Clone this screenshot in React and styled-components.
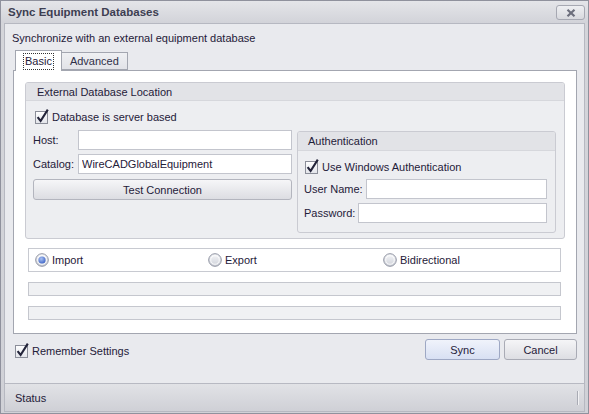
import styled, { createGlobalStyle } from "styled-components";

const Global = createGlobalStyle`
  html, body {
    margin: 0;
    padding: 0;
    background: #e9eaee;
  }
  * {
    box-sizing: border-box;
  }
  body {
    font-family: "Liberation Sans", Arial, sans-serif;
    font-size: 11px;
    color: #1f2039;
  }
`;

const CheckBox = ({ label }) => (
  <CheckRow>
    <svg width="15" height="16" viewBox="0 0 15 16">
      <defs>
        <linearGradient id="cbg" x1="0" y1="0" x2="0" y2="1">
          <stop offset="0" stopColor="#ffffff" />
          <stop offset="1" stopColor="#e2e4ea" />
        </linearGradient>
      </defs>
      <rect x="0.5" y="3.5" width="12" height="12" fill="url(#cbg)" stroke="#8b8e99" />
      <path d="M2.6 9.2 L5.6 13 L12.8 1.6" fill="none" stroke="#23243a" strokeWidth="2.1" strokeLinejoin="miter" />
    </svg>
    <span>{label}</span>
  </CheckRow>
);

const Radio = ({ label, checked }) => (
  <RadioItem>
    <svg width="14" height="14" viewBox="0 0 14 14">
      <defs>
        <linearGradient id="rbg" x1="0" y1="0" x2="0" y2="1">
          <stop offset="0" stopColor="#f6f7f9" />
          <stop offset="1" stopColor="#cdd0d8" />
        </linearGradient>
        <radialGradient id="rdot" cx="0.4" cy="0.35" r="0.7">
          <stop offset="0" stopColor="#a9c1f2" />
          <stop offset="1" stopColor="#3c63c6" />
        </radialGradient>
      </defs>
      <circle cx="7" cy="7" r="6.3" fill="url(#rbg)" stroke="#8f93a1" />
      <circle cx="7" cy="7" r="4.3" fill="none" stroke="#ffffff" strokeOpacity="0.8" />
      {checked && <circle cx="7" cy="7" r="3.6" fill="url(#rdot)" />}
    </svg>
    <span>{label}</span>
  </RadioItem>
);

const Field = ({ label, value, labelWidth }) => (
  <FieldRow>
    <Label width={labelWidth}>{label}</Label>
    <Input defaultValue={value} />
  </FieldRow>
);

export default function App() {
  return (
    <>
      <Global />
      <Window>
        <TitleBar>
          <Title>Sync Equipment Databases</Title>
          <CloseButton>
            <svg width="10" height="8" viewBox="0 0 10 8">
              <path d="M1.5 0.8 L8.5 7.2 M8.5 0.8 L1.5 7.2" stroke="#6c6e7c" strokeWidth="2.2" />
            </svg>
          </CloseButton>
        </TitleBar>
        <Frame>
          <Client>
            <Description>Synchronize with an external equipment database</Description>
            <TabRow>
              <Tab active>
                <FocusText>Basic</FocusText>
              </Tab>
              <Tab>Advanced</Tab>
            </TabRow>
            <TabPage>
              <Group>
                <GroupHeader>External Database Location</GroupHeader>
                <GroupBody>
                  <CheckBox label="Database is server based" />
                  <Columns>
                    <LeftColumn>
                      <Field label="Host:" labelWidth={45} />
                      <Field label="Catalog:" value="WireCADGlobalEquipment" labelWidth={45} />
                      <WideButton>Test Connection</WideButton>
                    </LeftColumn>
                    <AuthGroup>
                      <GroupHeader small>Authentication</GroupHeader>
                      <AuthBody>
                        <CheckBox label="Use Windows Authentication" />
                        <Field label="User Name:" />
                        <Field label="Password:" />
                      </AuthBody>
                    </AuthGroup>
                  </Columns>
                </GroupBody>
              </Group>
              <RadioPanel>
                <Radio label="Import" checked />
                <Radio label="Export" />
                <Radio label="Bidirectional" />
              </RadioPanel>
              <Progress />
              <Progress />
            </TabPage>
            <Footer>
              <CheckBox label="Remember Settings" />
              <Buttons>
                <Button primary>Sync</Button>
                <Button>Cancel</Button>
              </Buttons>
            </Footer>
            <StatusBar>
              <span>Status</span>
              <Grip />
            </StatusBar>
          </Client>
        </Frame>
      </Window>
    </>
  );
}

const Window = styled.div`
  width: 589px;
  height: 414px;
  border: 1px solid #8f919d;
  background: #e9eaee;
  display: flex;
  flex-direction: column;
`;

const TitleBar = styled.div`
  height: 22px;
  display: flex;
  align-items: center;
  justify-content: space-between;
  padding: 0 3px 0 7px;
  background: linear-gradient(#e4e5e9, #d2d3d9);
`;

const Title = styled.div`
  font-weight: bold;
  font-size: 11.5px;
  color: #3d3e52;
`;

const CloseButton = styled.div`
  width: 29px;
  height: 15px;
  margin-top: 1px;
  border: 1px solid #a6a8b2;
  border-radius: 3px;
  background: linear-gradient(#eeeff2, #d8d9de);
  display: flex;
  align-items: center;
  justify-content: center;
`;

const Frame = styled.div`
  flex: 1;
  display: flex;
  padding: 0 3px 1px;
  background: linear-gradient(#d4d5da, #d0d1d7);
`;

const Client = styled.div`
  flex: 1;
  display: flex;
  flex-direction: column;
  border: 1px solid #b6b8c1;
  background: #e9eaee;
  padding: 0 7px 0 8px;
`;

const Description = styled.div`
  margin: 7px 0 0 -1px;
  line-height: 14px;
`;

const TabRow = styled.div`
  display: flex;
  align-items: flex-end;
  height: 20px;
  margin-top: 5px;
  padding-left: 2px;
  position: relative;
  z-index: 1;
`;

const Tab = styled.div`
  height: ${(p) => (p.active ? "21px" : "18px")};
  margin-bottom: ${(p) => (p.active ? "-1px" : "0")};
  padding: 0 8px;
  display: flex;
  align-items: center;
  border: 1px solid #a3a6b0;
  border-bottom: ${(p) => (p.active ? "none" : "1px solid #a3a6b0")};
  border-left: ${(p) => (p.active ? "1px solid #a3a6b0" : "none")};
  background: ${(p) => (p.active ? "#ffffff" : "linear-gradient(#eff0f3, #e2e3e8)")};
  color: ${(p) => (p.active ? "#1f2039" : "#2e2f48")};
`;

const FocusText = styled.span`
  outline: 1px dotted #333;
  padding: 1px 1px 2px;
`;

const TabPage = styled.div`
  height: 264px;
  border: 1px solid #a3a6b0;
  background: #ffffff;
  padding: 11px 11px 0;
  display: flex;
  flex-direction: column;
`;

const Group = styled.div`
  height: 157px;
  border: 1px solid #cacbd2;
  border-radius: 3px;
  background: #edeef1;
  display: flex;
  flex-direction: column;
  overflow: hidden;
`;

const GroupHeader = styled.div`
  height: ${(p) => (p.small ? "19px" : "18px")};
  flex-shrink: 0;
  display: flex;
  align-items: center;
  padding-left: ${(p) => (p.small ? "10px" : "11px")};
  background: #e2e3e7;
  border-bottom: 1px solid #d6d7dc;
`;

const GroupBody = styled.div`
  padding: 7px 7px 0;
  display: flex;
  flex-direction: column;
  gap: 6px;
`;

const CheckRow = styled.div`
  display: flex;
  align-items: flex-end;
  gap: 2px;
  height: 16px;
  padding-left: 2px;
  span {
    line-height: 13px;
  }
`;

const Columns = styled.div`
  display: flex;
  gap: 5px;
  align-items: flex-start;
`;

const LeftColumn = styled.div`
  width: 259px;
  display: flex;
  flex-direction: column;
  gap: 4px;
`;

const FieldRow = styled.div`
  display: flex;
  align-items: center;
  gap: 3px;
`;

const Label = styled.div`
  width: ${(p) => (p.width ? `${p.width - 3}px` : "auto")};
  flex-shrink: 0;
`;

const Input = styled.input`
  flex: 1;
  min-width: 0;
  height: 20px;
  border: 1px solid #c3c5cd;
  background: #ffffff;
  padding: 0 3px;
  font: inherit;
  color: #1f2039;
  outline: none;
`;

const WideButton = styled.div`
  height: 21px;
  margin-top: 1px;
  border: 1px solid #b3b5be;
  border-radius: 3px;
  background: linear-gradient(#f6f6f8, #dcdde2);
  display: flex;
  align-items: center;
  justify-content: center;
`;

const AuthGroup = styled.div`
  width: 259px;
  height: 102px;
  margin-top: 1px;
  border: 1px solid #cacbd2;
  border-radius: 3px;
  background: #edeef1;
  overflow: hidden;
`;

const AuthBody = styled.div`
  padding: 7px 8px 0 6px;
  display: flex;
  flex-direction: column;
  gap: 4px;
  & > ${CheckRow} {
    margin-bottom: 1px;
    padding-left: 1px;
  }
`;

const RadioPanel = styled.div`
  height: 24px;
  margin: 9px 4px 0 3px;
  border: 1px solid #c8cad1;
  background: #ffffff;
  display: grid;
  grid-template-columns: 173px 175px 1fr;
  align-items: center;
  padding-left: 6px;
`;

const RadioItem = styled.div`
  display: flex;
  align-items: center;
  gap: 3px;
`;

const Progress = styled.div`
  height: 14px;
  margin: 10px 4px 0 3px;
  border: 1px solid #c5c7ce;
  background: #f0f1f3;
`;

const Footer = styled.div`
  display: flex;
  justify-content: space-between;
  align-items: center;
  margin-top: 5px;
`;

const Buttons = styled.div`
  display: flex;
  gap: 4px;
`;

const Button = styled.div`
  width: ${(p) => (p.primary ? "75px" : "73px")};
  height: 21px;
  border: 1px solid ${(p) => (p.primary ? "#9ea8c4" : "#a9abb5")};
  border-radius: 3px;
  background: ${(p) =>
    p.primary ? "linear-gradient(#f0f3fb, #d8e0f3)" : "linear-gradient(#f5f5f7, #dddee3)"};
  display: flex;
  align-items: center;
  justify-content: center;
`;

const StatusBar = styled.div`
  margin: auto -7px 0 -8px;
  height: 28px;
  border-top: 1px solid #b7b9c2;
  background: linear-gradient(#e1e2e6, #cfd0d6);
  display: flex;
  align-items: center;
  justify-content: space-between;
  padding: 0 6px 0 10px;
`;

const Grip = styled.div`
  width: 1px;
  height: 14px;
  background: #a9abb4;
  box-shadow: 1px 0 0 #f2f2f4;
`;
